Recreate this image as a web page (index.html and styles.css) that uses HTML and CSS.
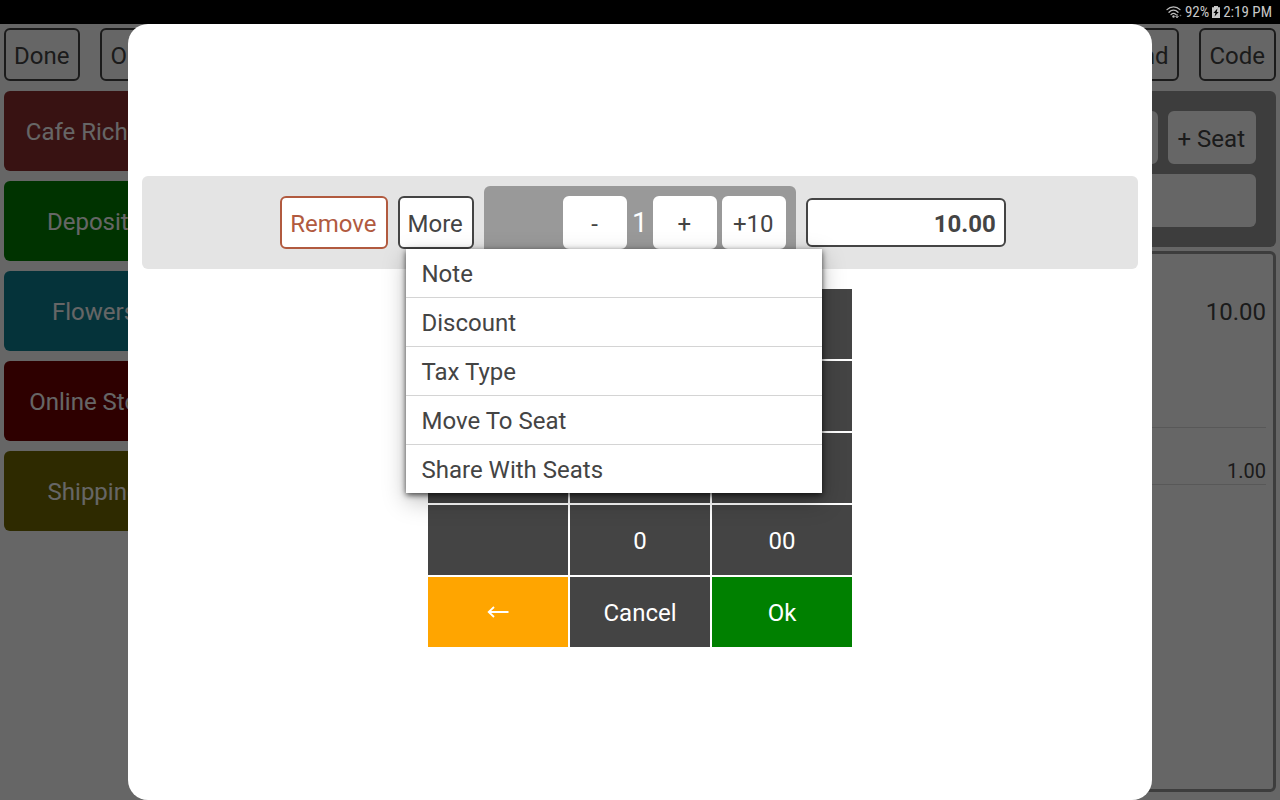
FILE: index.html
```html
<!DOCTYPE html>
<html lang="en">
<head>
<meta charset="utf-8">
<meta name="viewport" content="width=device-width, initial-scale=1">
<title>Point of Sale</title>
<link rel="stylesheet" href="styles.css">
</head>
<body>
<header class="status">
  <svg class="status-wifi" viewBox="0 0 16 14" aria-hidden="true">
    <g fill="none" stroke="#bdbdbd" stroke-width="1.3" stroke-linecap="round">
      <path d="M1 4.6C4.6 1 10.400 1 14 4.600"/>
      <path d="M3 7.200C5.600 4.500 9.400 4.500 12 7.200"/>
      <path d="M5 9.600C6.600 8 8.400 8 10 9.600"/>
    </g>
    <circle cx="7.500" cy="11.500" r="1.200" fill="#bdbdbd"/>
    <path d="M11 9v3.500M9.500 11l1.500 1.800 1.500-1.800" fill="none" stroke="#bdbdbd"/>
    <circle cx="14.500" cy="10.500" r=".8" fill="#777"/>
  </svg>
  <span>92%</span>
  <svg class="status-battery" viewBox="0 0 8 12" aria-hidden="true">
    <path d="M2 0h4v1.200H8V12H0V1.200h2z" fill="#c8c8c8"/>
    <path d="M5.400 2.500 1.400 7h2l-.8 3.500L6.700 6h-2z" fill="#000"/>
  </svg>
  <span>2:19 PM</span>
</header>

<div class="screen">
  <div class="app">
    <nav class="toolbar">
      <button class="btn">Done</button>
      <button class="btn">Orders</button>
      <span class="toolbar-space"></span>
      <button class="btn">Send</button>
      <button class="btn">Code</button>
    </nav>
    <div class="columns">
      <div class="categories">
        <button class="tile tile-brown">Cafe Richard</button>
        <button class="tile tile-green">Deposits</button>
        <button class="tile tile-teal">Flowers</button>
        <button class="tile tile-maroon">Online Store</button>
        <button class="tile tile-olive">Shipping</button>
      </div>
      <div class="order">
        <div class="seats">
          <div class="seats-row">
            <button class="btn btn-plain">Seat 1</button>
            <button class="btn btn-plain">+ Seat</button>
          </div>
          <input class="seats-field" type="text" aria-label="Seat name">
        </div>
        <div class="lines">
          <div class="line line-item">10.00</div>
          <div class="line line-tax">1.00</div>
        </div>
      </div>
    </div>
  </div>

  <div class="scrim">
    <div class="dialog" role="dialog" aria-label="Edit item">
      <div class="editor">
        <button class="btn btn-danger">Remove</button>
        <div class="more">
          <button class="btn" aria-haspopup="menu" aria-expanded="true">More</button>
          <div class="menu" role="menu">
            <button class="menu-item" role="menuitem">Note</button>
            <button class="menu-item" role="menuitem">Discount</button>
            <button class="menu-item" role="menuitem">Tax Type</button>
            <button class="menu-item" role="menuitem">Move To Seat</button>
            <button class="menu-item" role="menuitem">Share With Seats</button>
          </div>
        </div>
        <div class="stepper">
          <button class="btn btn-plain step">-</button>
          <span class="quantity">1</span>
          <button class="btn btn-plain step">+</button>
          <button class="btn btn-plain step">+10</button>
        </div>
        <input class="price" type="text" value="10.00" aria-label="Price">
      </div>
      <div class="keypad">
        <button class="key" aria-label="7"></button>
        <button class="key" aria-label="8"></button>
        <button class="key" aria-label="9"></button>
        <button class="key" aria-label="4"></button>
        <button class="key" aria-label="5"></button>
        <button class="key" aria-label="6"></button>
        <button class="key" aria-label="1"></button>
        <button class="key" aria-label="2"></button>
        <button class="key" aria-label="3"></button>
        <button class="key" aria-label="Blank"></button>
        <button class="key">0</button>
        <button class="key">00</button>
        <button class="key key-back" aria-label="Backspace">
          <svg class="arrow" viewBox="0 0 22 12" aria-hidden="true"><path d="M21.500 6H2M7 1 1.700 6 7 11" fill="none" stroke="#fff" stroke-width="1.800"/></svg>
        </button>
        <button class="key">Cancel</button>
        <button class="key key-ok">Ok</button>
      </div>
    </div>
  </div>
</div>
</body>
</html>
```
FILE: styles.css
```css
* {
  box-sizing: border-box;
}

body {
  margin: 0;
  min-height: 100vh;
  display: flex;
  flex-direction: column;
  background: #fff;
  color: #444;
  font: 24px/29px Roboto, "Liberation Sans", sans-serif;
}

button,
input {
  margin: 0;
  font: inherit;
  color: inherit;
}

/* Status bar */
.status {
  display: flex;
  align-items: center;
  justify-content: flex-end;
  gap: 3px;
  height: 24px;
  padding: 0 8px;
  background: #000;
  color: #c8c8c8;
  font-family: "Roboto Condensed", Roboto, sans-serif;
  font-size: 15px;
  line-height: 24px;
}

.status-wifi {
  width: 16px;
  height: 14px;
}

.status-battery {
  width: 8px;
  height: 12px;
}

.screen {
  position: relative;
  flex: 1;
  display: flex;
}

/* Register */
.app {
  flex: 1;
  display: flex;
  flex-direction: column;
  gap: 10px;
  padding: 4px 4px 8px;
}

.toolbar {
  display: flex;
  gap: 20px;
}

.toolbar-space {
  flex: 1;
}

.btn {
  padding: 12px 9px 8px 8px;
  border: 2px solid #444;
  border-radius: 6px;
  background: #fff;
  white-space: nowrap;
}

.btn-danger {
  border-color: #b15a3f;
  color: #b15a3f;
}

.btn-plain {
  border-color: #fff;
}

.columns {
  flex: 1;
  display: flex;
  justify-content: space-between;
}

.categories {
  display: flex;
  flex-direction: column;
  gap: 10px;
  width: 180px;
}

.tile {
  height: 80px;
  padding: 2px 0 0;
  border: 0;
  border-radius: 6px;
  color: #fff;
}

.tile-brown { background: #8c2d2d; }
.tile-green { background: #008000; }
.tile-teal { background: #0d8091; }
.tile-maroon { background: #730000; }
.tile-olive { background: #736900; }

.order {
  width: 36%;
  display: flex;
  flex-direction: column;
  gap: 4px;
}

.seats {
  display: flex;
  flex-direction: column;
  gap: 10px;
  padding: 20px;
  border-radius: 6px;
  background: #999;
}

.seats-row {
  display: flex;
  justify-content: flex-end;
  gap: 10px;
}

.seats-field {
  height: 53px;
  border: 0;
  border-radius: 6px;
  background: #fff;
}

.lines {
  flex: 1;
  border: 3px solid #999;
  border-radius: 6px;
  padding: 0 7px;
}

.line {
  border-bottom: 1px solid #ddd;
  text-align: right;
}

.line-item {
  padding: 44px 0 100px;
}

.line-tax {
  padding: 30px 0 0;
  font-size: 20px;
  line-height: 26px;
}

/* Item dialog */
.scrim {
  position: absolute;
  inset: 0;
  display: flex;
  justify-content: center;
  background: rgba(0, 0, 0, .6);
}

.dialog {
  width: 80%;
  display: flex;
  flex-direction: column;
  align-items: center;
  justify-content: center;
  gap: 20px;
  padding: 0 14px 2px;
  border-radius: 20px;
  background: #fff;
}

.editor {
  align-self: stretch;
  display: flex;
  align-items: center;
  justify-content: center;
  gap: 10px;
  padding: 10px 10px 10px 16px;
  border-radius: 6px;
  background: #e4e4e4;
}

.more {
  position: relative;
}

.stepper {
  display: flex;
  align-items: center;
  justify-content: flex-end;
  gap: 5px;
  width: 312px;
  padding: 10px;
  border-radius: 6px;
  background: #999;
}

.step {
  width: 64px;
}

.quantity {
  color: #fff;
  font-size: 28px;
}

.price {
  width: 200px;
  height: 49px;
  padding: 4px 8px 0;
  border: 2px solid #444;
  border-radius: 6px;
  background: #fff;
  font-weight: 700;
  text-align: right;
}

.menu {
  position: absolute;
  z-index: 1;
  top: 100%;
  left: 8px;
  width: 416px;
  background: #fff;
  box-shadow: 0 2px 6px rgba(0, 0, 0, .7), 0 8px 22px rgba(0, 0, 0, .25);
}

.menu-item {
  display: block;
  width: 100%;
  height: 49px;
  padding: 4px 16px 0;
  border: 0;
  border-bottom: 1px solid #d4d4d4;
  background: none;
  text-align: left;
}

.menu-item:last-child {
  height: 48px;
  border-bottom: 0;
}

.keypad {
  display: grid;
  grid-template-columns: repeat(3, 140px);
  grid-auto-rows: 70px;
  gap: 2px;
}

.key {
  display: flex;
  align-items: center;
  justify-content: center;
  padding: 4px 0 0;
  border: 0;
  background: #444;
  color: #fff;
}

.key-back {
  padding: 0;
  background: #ffa500;
}

.key-ok {
  background: #008000;
}

.arrow {
  width: 22px;
  height: 12px;
}
```
